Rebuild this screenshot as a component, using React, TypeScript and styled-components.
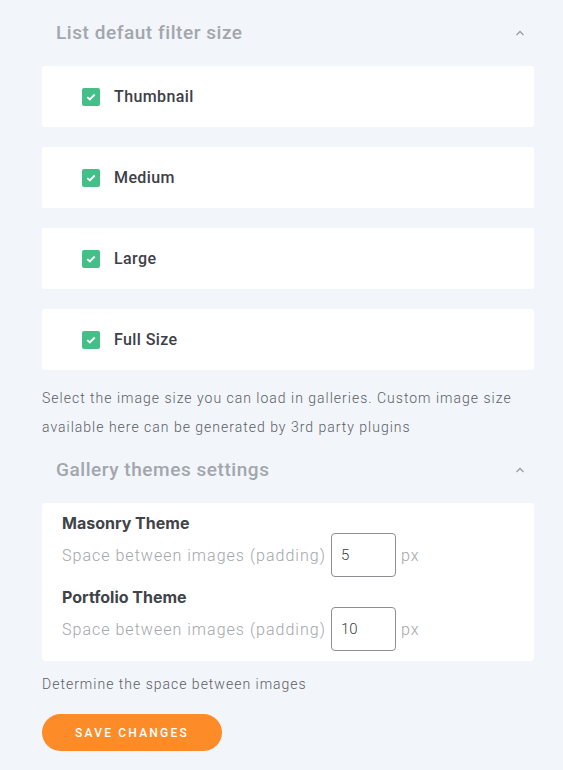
import React, { useState } from 'react';
import styled, { createGlobalStyle } from 'styled-components';

const GlobalStyle = createGlobalStyle`
  html, body {
    margin: 0;
    padding: 0;
    background: #f2f5f9;
  }
  * {
    box-sizing: border-box;
  }
`;

const Page = styled.div`
  width: 563px;
  min-height: 770px;
  padding: 0 29px 0 42px;
  background: #f2f5f9;
  font-family: Roboto, 'Liberation Sans', sans-serif;
`;

const SectionHeader = styled.div<{ $height: number; $top: number }>`
  display: flex;
  align-items: flex-start;
  justify-content: space-between;
  height: ${(p) => p.$height}px;
  padding: ${(p) => p.$top}px 9px 0 14px;
`;

const SectionTitle = styled.h2`
  margin: 0;
  font-size: 19px;
  line-height: 24px;
  font-weight: 500;
  letter-spacing: 0.55px;
  color: #a2a6ad;
`;

const Chevron = styled.svg`
  width: 10px;
  height: 24px;
  color: #9a9ea5;
`;

const OptionList = styled.div`
  display: flex;
  flex-direction: column;
  gap: 20px;
`;

const OptionCard = styled.label`
  display: flex;
  align-items: center;
  gap: 14px;
  height: 61px;
  padding-left: 40px;
  background: #fff;
  border-radius: 2px;
  cursor: pointer;
`;

const Box = styled.span<{ $checked: boolean }>`
  display: flex;
  align-items: center;
  justify-content: center;
  width: 18px;
  height: 18px;
  border-radius: 2px;
  background: ${(p) => (p.$checked ? '#45bf88' : '#fff')};
  border: ${(p) => (p.$checked ? 'none' : '1px solid #bbb')};
`;

const OptionLabel = styled.span`
  font-size: 16px;
  font-weight: 500;
  letter-spacing: 0.4px;
  color: #3d4046;
`;

const Help = styled.p<{ $top: number }>`
  margin: ${(p) => p.$top}px 0 0;
  font-size: 14px;
  line-height: 29px;
  font-weight: 300;
  letter-spacing: 1px;
  color: #5a5e65;
`;

const ThemeCard = styled.div`
  padding: 10px 20px 10px 20px;
  background: #fff;
  border-radius: 4px;
`;

const ThemeTitle = styled.div<{ $top: number }>`
  margin-top: ${(p) => p.$top}px;
  font-family: Inter, Roboto, sans-serif;
  font-size: 16px;
  line-height: 20px;
  font-weight: 700;
  color: #404348;
`;

const ThemeRow = styled.div`
  display: flex;
  align-items: center;
  gap: 5px;
  height: 44px;
`;

const FieldText = styled.span`
  font-size: 16px;
  font-weight: 300;
  letter-spacing: 1.02px;
  color: #a3a6ab;
`;

const NumberInput = styled.input`
  width: 65px;
  height: 44px;
  padding: 0 9px;
  border: 1px solid #8c8f94;
  border-radius: 4px;
  font-family: Roboto, sans-serif;
  font-size: 15px;
  font-weight: 300;
  color: #3a3d42;
  background: #fff;
  outline: none;
`;

const SaveButton = styled.button`
  display: block;
  margin-top: 15px;
  width: 180px;
  height: 37px;
  border: none;
  border-radius: 19px;
  background: #fd8b27;
  color: #fff;
  font-family: Roboto, sans-serif;
  font-size: 12px;
  font-weight: 500;
  letter-spacing: 2.2px;
  cursor: pointer;
`;

const ChevronUp = () => (
  <Chevron viewBox="0 0 10 24">
    <polyline points="1.5,14 5,10.5 8.5,14" fill="none" stroke="currentColor" strokeWidth="1.3" />
  </Chevron>
);

const Check = () => (
  <svg width="10" height="8" viewBox="0 0 10 8">
    <polyline points="1.3,4.2 3.8,6.5 8.7,1.5" fill="none" stroke="#fff" strokeWidth="1.8" />
  </svg>
);

const sizes = ['Thumbnail', 'Medium', 'Large', 'Full Size'];

export default function App() {
  const [checked, setChecked] = useState<Record<string, boolean>>({
    Thumbnail: true,
    Medium: true,
    Large: true,
    'Full Size': true,
  });
  const [masonry, setMasonry] = useState('5');
  const [portfolio, setPortfolio] = useState('10');

  return (
    <Page>
      <GlobalStyle />
      <SectionHeader $height={66} $top={21}>
        <SectionTitle>List defaut filter size</SectionTitle>
        <ChevronUp />
      </SectionHeader>
      <OptionList>
        {sizes.map((s) => (
          <OptionCard key={s} onClick={() => setChecked({ ...checked, [s]: !checked[s] })}>
            <Box $checked={checked[s]}>{checked[s] && <Check />}</Box>
            <OptionLabel>{s}</OptionLabel>
          </OptionCard>
        ))}
      </OptionList>
      <Help $top={14}>
        Select the image size you can load in galleries. Custom image size available here can be generated by 3rd party plugins
      </Help>
      <SectionHeader $height={61} $top={16}>
        <SectionTitle>Gallery themes settings</SectionTitle>
        <ChevronUp />
      </SectionHeader>
      <ThemeCard>
        <ThemeTitle $top={0}>Masonry Theme</ThemeTitle>
        <ThemeRow>
          <FieldText>Space between images (padding)</FieldText>
          <NumberInput value={masonry} onChange={(e) => setMasonry(e.target.value)} />
          <FieldText>px</FieldText>
        </ThemeRow>
        <ThemeTitle $top={10}>Portfolio Theme</ThemeTitle>
        <ThemeRow>
          <FieldText>Space between images (padding)</FieldText>
          <NumberInput value={portfolio} onChange={(e) => setPortfolio(e.target.value)} />
          <FieldText>px</FieldText>
        </ThemeRow>
      </ThemeCard>
      <Help $top={9}>Determine the space between images</Help>
      <SaveButton>SAVE CHANGES</SaveButton>
    </Page>
  );
}
